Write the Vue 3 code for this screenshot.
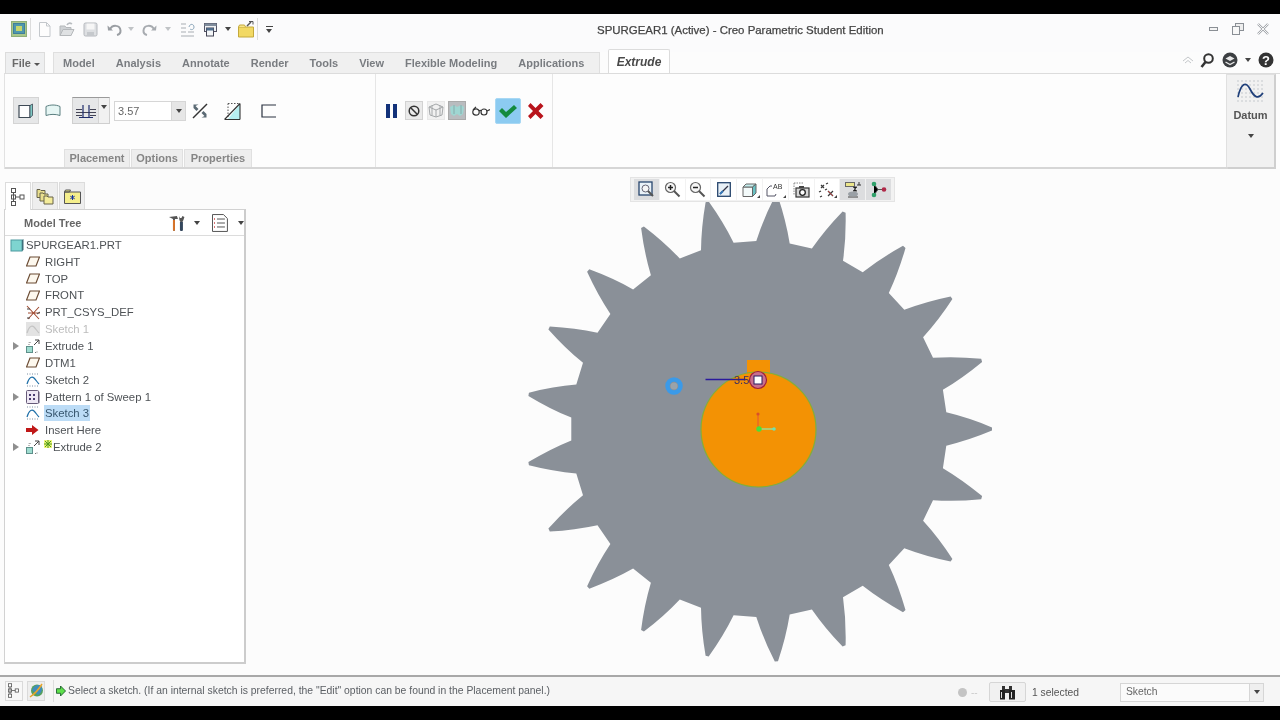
<template>
  <div class="screen">
    <div class="black top-black"></div>

    <!-- quick access + title -->
    <div class="titlebar">
      <svg class="qa i-app" width="16" height="16" viewBox="0 0 16 16"><rect x=".5" y=".5" width="15" height="15" fill="#a8c78a" stroke="#8fae78"/><rect x="2.5" y="2.5" width="11" height="10" fill="#4f97ad" stroke="#3f7f9a"/><rect x="5" y="5" width="6" height="5" fill="#c6d66c"/></svg>
      <i class="qa-sep"></i>
      <svg class="qa m7" width="13" height="15" viewBox="0 0 13 15"><path d="M1.5 .5h7l3.500 3.500v10.500h-10.500z" fill="#fdfdfd" stroke="#c4c8cc"/><path d="M8.500 .5v3.500h3.500" fill="none" stroke="#c4c8cc"/></svg>
      <svg class="qa m8" width="16" height="15" viewBox="0 0 16 15"><path d="M1 4h5l1 1.500h5v8h-11z" fill="#cfd2d5" stroke="#b5b8bb"/><path d="M1 13.500l3-6h11l-3 6z" fill="#dfe1e3" stroke="#b5b8bb"/><path d="M8 3c1-2 3-2.500 5-1" fill="none" stroke="#b8bcc0" stroke-width="1.500"/></svg>
      <svg class="qa m8" width="15" height="15" viewBox="0 0 15 15"><rect x="1" y="1" width="13" height="13" rx="1.500" fill="#dddfe2" stroke="#b5b8bd"/><rect x="3.500" y="1.500" width="8" height="6" fill="#f6f6f6"/><rect x="4" y="10" width="7" height="4" fill="#c5c8cc"/></svg>
      <svg class="qa m9" width="15" height="13" viewBox="0 0 15 13"><path d="M3 6.500c2-5 10-5 10.500 1 .2 2.500-1.500 4-3.500 4.500" fill="none" stroke="#9a9ea3" stroke-width="2"/><path d="M.5 2.500l5.500 5h-5z" fill="#9a9ea3"/></svg>
      <span class="mini-arrow light m6"></span>
      <svg class="qa m8" width="15" height="13" viewBox="0 0 15 13"><path d="M12 6.500c-2-5-10-5-10.500 1-.2 2.500 1.500 4 3.500 4.500" fill="none" stroke="#a7abb0" stroke-width="2"/><path d="M14.500 2.500l-5.500 5h5z" fill="#a7abb0"/></svg>
      <span class="mini-arrow light m8"></span>
      <svg class="qa m9" width="15" height="15" viewBox="0 0 15 15"><g fill="none" stroke="#a8adb3"><path d="M1 2h5M1 6h5M1 10h5M1 14h13M8 10h6"/><path d="M9 5c1-4 5-3 5 0s-3 3-4 2" stroke="#8da7bb"/></g></svg>
      <svg class="qa m8" width="15" height="15" viewBox="0 0 15 15"><rect x="1.500" y="1.500" width="12" height="8" fill="#eef1f4" stroke="#556"/><rect x="1.500" y="1.500" width="12" height="2.500" fill="#7f8c9c"/><rect x="3.500" y="6" width="7" height="8" fill="#f4f6f8" stroke="#445"/><rect x="3.500" y="6" width="7" height="2.500" fill="#4f6d8c"/></svg>
      <span class="mini-arrow m7"></span>
      <svg class="qa m7" width="16" height="17" viewBox="0 0 16 17"><path d="M.5 6h15v10h-15z" fill="#f2d964" stroke="#c4a93c"/><path d="M.5 6l1-2h5l1 2" fill="#f7e48c" stroke="#c4a93c"/><path d="M9 5l4-4" stroke="#555" stroke-width="1.500"/><path d="M11 .5h4v3" fill="none" stroke="#555"/></svg>
      <i class="qa-sep m5"></i>
      <span class="qa-custom m8"></span>
      <div class="title">SPURGEAR1 (Active) - Creo Parametric Student Edition</div>
      <div class="win-btns">
        <svg width="10" height="6" viewBox="0 0 10 6"><rect x=".5" y="1.500" width="8" height="3" fill="#f4f4f4" stroke="#8a8f95"/></svg>
        <svg width="12" height="12" viewBox="0 0 12 12"><rect x="3.500" y=".5" width="8" height="7" fill="#eee" stroke="#8a8f95"/><rect x=".5" y="3.500" width="7" height="8" fill="#f8f8f8" stroke="#8a8f95"/></svg>
        <svg width="12" height="12" viewBox="0 0 12 12"><path d="M1 1l10 10M11 1l-10 10" stroke="#a2a6ab" stroke-width="2.400"/><path d="M1 1l10 10M11 1l-10 10" stroke="#f6f6f6" stroke-width="1"/></svg>
      </div>
    </div>

    <!-- ribbon tabs -->
    <div class="tabrow">
      <div class="file-btn">File<span class="tiny-arrow"></span></div>
      <div class="tabstrip">
        <span v-for="t in tabs" :key="t" class="tab">{{ t }}</span>
      </div>
      <div class="active-tab">Extrude</div>
      <div class="help-icons">
        <svg width="12" height="8" viewBox="0 0 12 8"><path d="M1 5l5-4 5 4M3 7l3-2.500 3 2.500" fill="none" stroke="#c4c7ca"/></svg>
        <svg class="m6" width="14" height="15" viewBox="0 0 14 15"><circle cx="8.500" cy="5.500" r="4.300" fill="none" stroke="#333" stroke-width="2"/><path d="M5.500 9l-4 5" stroke="#333" stroke-width="2.600"/></svg>
        <svg class="m8" width="16" height="16" viewBox="0 0 16 16"><circle cx="8" cy="8" r="7.500" fill="#3c3f42"/><path d="M3.500 6.500l4.500-2.500 4.500 2.500-4.500 2.500z" fill="#e8e8e8"/><path d="M3.500 10l4.500 2.500 4.500-2.500" fill="none" stroke="#e8e8e8" stroke-width="1.400"/></svg>
        <span class="mini-arrow m7"></span>
        <svg class="m7" width="16" height="16" viewBox="0 0 16 16"><circle cx="8" cy="8" r="7.500" fill="#333"/><text x="8" y="12.500" text-anchor="middle" class="help-q">?</text></svg>
      </div>
    </div>

    <!-- ribbon -->
    <div class="ribbon">
      <div class="rib-group g1">
        <div class="tools">
          <div class="tog t-solid">
            <svg width="16" height="16" viewBox="0 0 16 16"><path d="M1 2.500h11v12h-11z" fill="#fdfdfd" stroke="#3e4a55" stroke-width="1.200"/><path d="M12 2.500l2.500-1.500v11.500l-2.500 2z" fill="#7fc9c4" stroke="#3e4a55" stroke-width=".8"/></svg>
          </div>
          <svg class="m6" width="16" height="14" viewBox="0 0 16 14"><path d="M1 2.500c4-2 10-2 14 0v9c-4-1.500-10-1.500-14 0z" fill="#e6f6f4" stroke="#5b7f80"/></svg>
          <div class="tog-split m11">
            <div class="depth"><svg width="20" height="14" viewBox="0 0 20 14"><path d="M0 5.500h6M0 8.500h20M0 11.500h6M14 5.500h6M14 11.500h6" stroke="#445"/><path d="M7 1v12M13 1v12" stroke="#1f2c6b" stroke-width="1.200"/><path d="M3 13.500h14" stroke="#1f2c6b"/></svg></div>
            <div class="depth-arrow"><span class="mini-arrow"></span></div>
          </div>
          <div class="combo m4"><span class="val">3.57</span><b><span class="mini-arrow"></span></b></div>
          <svg class="m6" width="16" height="16" viewBox="0 0 16 16"><path d="M1 15L15 1" stroke="#333" stroke-width="1.400"/><path d="M1.500 1.500h5l-3 1.500 3 3-2 2-3-3z" fill="#5b6a74"/><path d="M14.500 14.500h-5l3-1.500-3-3 2-2 3 3z" fill="#5b6a74"/></svg>
          <svg class="m16" width="18" height="18" viewBox="0 0 18 18"><path d="M4 17L16 2v15z" fill="#b6eef0"/><path d="M4 1.500h12M4 1.500v15" stroke="#555" stroke-dasharray="1.500 1.500" fill="none"/><path d="M.5 17.500L16 1.500M16 1.500v16M1 17.500h15" stroke="#333" stroke-width="1.100" fill="none"/></svg>
          <svg class="m19" width="15" height="14" viewBox="0 0 15 14"><path d="M15 1H1v12h14" fill="none" stroke="#2a3340" stroke-width="1.200"/></svg>
        </div>
        <div class="subtabs">
          <span class="subtab s1">Placement</span>
          <span class="subtab s2">Options</span>
          <span class="subtab s3">Properties</span>
        </div>
      </div>

      <div class="rib-group g2">
        <div class="tools tools2">
          <svg width="11" height="14" viewBox="0 0 11 14"><path d="M0 0h4v14h-4zM7 0h4v14h-4z" fill="#13327a"/></svg>
          <div class="sq-btn m8"><svg width="12" height="12" viewBox="0 0 12 12"><circle cx="6" cy="6" r="4.800" fill="none" stroke="#333" stroke-width="1.500"/><path d="M2.500 2.500l7 7" stroke="#333" stroke-width="1.500"/></svg></div>
          <div class="sq-btn plain m4"><svg width="16" height="15" viewBox="0 0 16 15"><g fill="none" stroke="#a5a8aa"><path d="M1 4l7-3 7 3-1 8-6 2-6-2zM1 4l7 3 7-3M8 7v7M4 2.500v10M12 2.500v10"/></g></svg></div>
          <div class="sq-btn dark m3"><svg width="16" height="15" viewBox="0 0 16 15"><path d="M1 4l4-2 3 2 4-2 3 2-1 7-3 2-3-2-3 2-3-2z" fill="#9fd6d2"/><path d="M5 2v9M12 2v9" stroke="#8aa"/></svg></div>
          <svg class="m6" width="18" height="10" viewBox="0 0 18 10"><g fill="none" stroke="#333" stroke-width="1.200"><circle cx="4" cy="6" r="3.200"/><circle cx="12" cy="6" r="3"/><path d="M7 5c1-1 1.500-1 2 0M15 5l3-1.500M1 4L4 .8"/></g></svg>
          <div class="ok-btn m5"><svg width="20" height="16" viewBox="0 0 20 16"><path d="M1 8l3-3 4 4 8-7 3 3-11 10z" fill="#138a3e"/></svg></div>
          <svg class="m6" width="17" height="16" viewBox="0 0 17 16"><path d="M1 3l2.500-3 5 5 5-5 3 3-5 5 5 5-3 3-5-5-5 5-2.500-3 5-5z" fill="#b8141c"/></svg>
        </div>
      </div>

      <div class="rib-fill"></div>

      <div class="datum">
        <svg class="datum-ic" width="30" height="24" viewBox="0 0 30 24"><g fill="#b4bac0"><circle v-for="d in datumDots" :key="d.k" :cx="d.x" :cy="d.y" r=".7"/></g><path d="M2 17C5 3 10 1 14 9s8 11 13 4" fill="none" stroke="#1f3f7a" stroke-width="1.700"/></svg>
        <div class="datum-lbl">Datum</div>
        <span class="mini-arrow"></span>
      </div>
    </div>

    <div class="main">
      <!-- model tree panel -->
      <div class="side">
        <div class="nav-tabs">
          <div class="nav-tab on">
            <svg width="15" height="18" viewBox="0 0 15 18"><g fill="#fff" stroke="#555"><rect x=".5" y=".5" width="4" height="4"/><rect x=".5" y="7" width="4" height="4"/><rect x=".5" y="13.500" width="4" height="4"/><rect x="9" y="7" width="4" height="4"/></g><path d="M2.500 4.500v9M4.500 9H9" stroke="#555"/></svg>
          </div>
          <div class="nav-tab">
            <svg width="18" height="18" viewBox="0 0 18 18"><g fill="#e9df8e" stroke="#66624a"><path d="M1 2.500h3l1 1h4v7H1z"/><path d="M4 6h3l1 1h4v7H4z"/><path d="M8 9h3l1 1h5v7H8z" fill="#f4ec9a"/></g></svg>
          </div>
          <div class="nav-tab">
            <svg width="17" height="15" viewBox="0 0 17 15"><path d="M.5 3h5l1-2h-5l-1 2zM.5 3h16v11.500h-16z" fill="#f5ef8c" stroke="#555"/><path d="M8.500 6v5M6.300 7.200l4.400 2.600M10.700 7.200L6.300 9.800" stroke="#1533a0"/></svg>
          </div>
        </div>
        <div class="tree-panel">
          <div class="tree-head">
            <span class="tree-title">Model Tree</span>
            <svg class="ic-tools" width="18" height="18" viewBox="0 0 18 18"><path d="M1 3l8-1 1 3H7v11c0 1-1.500 1.500-2 0V5z" fill="#555" /><path d="M5 6h2v10c0 1-1.500 1.500-2 0z" fill="#d8742a"/><path d="M12 8h3v8c0 1.500-3 1.500-3 0z" fill="#33465c"/><path d="M11 2l1 2 1.500 0 1-2 2 1-1 3-1 2h-2l-1-2z" fill="#555"/></svg>
            <span class="mini-arrow m8"></span>
            <svg class="m12" width="16" height="18" viewBox="0 0 16 18"><path d="M.5.5h11l4 4v13H.5z" fill="#fff" stroke="#555"/><path d="M5 5h8M5 9h8M5 13h8" stroke="#555"/><path d="M2 5h1M2 9h1M2 13h1" stroke="#c44" stroke-width="1.400"/></svg>
            <span class="mini-arrow m10"></span>
          </div>
          <div class="tree">
            <div v-for="r in rows" :key="r.label" class="row" :class="{ root: r.kind === 'root', off: r.off }">
              <span class="tw"><i v-if="r.more"></i></span>
              <span class="ic">
                <svg v-if="r.kind === 'root'" width="14" height="14" viewBox="0 0 14 14"><rect x="1" y="2" width="11" height="11" fill="#7ed4d0" stroke="#4d9aa0"/><path d="M12 2l1.500-1v11l-1.500 1z" fill="#3d6f7a"/></svg>
                <svg v-else-if="r.kind === 'plane'" width="14" height="11" viewBox="0 0 14 11"><path d="M4 1h9.500l-3.500 9H.5z" fill="#fdf8ee" stroke="#6a4b33" stroke-width="1.200"/></svg>
                <svg v-else-if="r.kind === 'csys'" width="15" height="15" viewBox="0 0 15 15"><path d="M1 1l12 13M13 2L2 14M2 8h12" stroke="#a04a30" stroke-width="1.100"/><path d="M1 4h3M11 9l3-2M1 13h3" stroke="#444"/></svg>
                <svg v-else-if="r.kind === 'sketch'" width="14" height="14" viewBox="0 0 14 14"><rect v-if="r.off" width="14" height="14" fill="#e3e3e3"/><path d="M1 1h12M1 13h12" :stroke="r.off ? '#e3e3e3' : '#7a8da0'" stroke-dasharray="1 1.500"/><path d="M1 11C3 4 6 3 8 5s3 4 5 6" fill="none" :stroke="r.off ? '#c4c4c4' : '#1e6fa8'" stroke-width="1.200"/></svg>
                <svg v-else-if="r.kind === 'extrude'" width="14" height="14" viewBox="0 0 14 14"><rect x=".5" y="7.500" width="6" height="6" fill="#9fdcd0" stroke="#5d8f8a"/><path d="M3 6V3.500h2M9 13.500h2v-2" fill="none" stroke="#777" stroke-dasharray="1 1"/><path d="M8 6l5-5M9 1h4v4" fill="none" stroke="#444"/></svg>
                <svg v-else-if="r.kind === 'pattern'" width="14" height="14" viewBox="0 0 14 14"><rect x=".5" y=".5" width="12" height="13" rx="1" fill="#eee8f4" stroke="#665a78"/><path d="M12.500 1l1 1v11l-1 .5z" fill="#665a78"/><g fill="#4a3c70"><rect x="3" y="4" width="2" height="2"/><rect x="7" y="4" width="2" height="2"/><rect x="3" y="8" width="2" height="2"/><rect x="7" y="8" width="2" height="2"/></g></svg>
                <svg v-else-if="r.kind === 'insert'" width="13" height="10" viewBox="0 0 13 10"><path d="M0 3h6V0l6.500 5L6 10V7H0z" fill="#c01818"/></svg>
              </span>
              <svg v-if="r.star" class="star" width="8" height="8" viewBox="0 0 8 8"><rect width="8" height="8" fill="#eef47a"/><path d="M4 0v8M0 4h8M1 1l6 6M7 1L1 7" stroke="#4f9a1c"/></svg>
              <span class="lbl" :class="{ sel: r.sel }">{{ r.label }}</span>
            </div>
          </div>
        </div>
      </div>

      <!-- graphics window -->
      <div class="canvas">
        <div class="view-bar">
          <div class="vb on"><svg width="17" height="17" viewBox="0 0 17 17"><rect x="1" y="1" width="13" height="13" fill="#eaf2f8" stroke="#27466d" stroke-width="1.300"/><circle cx="7.500" cy="7.500" r="3.500" fill="#f6f6f6" stroke="#667"/><path d="M10 10l5 5" stroke="#555" stroke-width="2"/></svg></div>
          <div class="vb"><svg width="17" height="17" viewBox="0 0 17 17"><circle cx="6.500" cy="6.500" r="5" fill="#f6f6f6" stroke="#666" stroke-width="1.200"/><path d="M4 6.500h5M6.500 4v5" stroke="#222" stroke-width="1.500"/><path d="M10 10l5.500 5.500" stroke="#555" stroke-width="2"/></svg></div>
          <div class="vb"><svg width="17" height="17" viewBox="0 0 17 17"><circle cx="6.500" cy="6.500" r="5" fill="#f6f6f6" stroke="#666" stroke-width="1.200"/><path d="M4 6.500h5" stroke="#222" stroke-width="1.500"/><path d="M10 10l5.500 5.500" stroke="#555" stroke-width="2"/></svg></div>
          <div class="vb"><svg width="14" height="15" viewBox="0 0 14 15"><rect x=".7" y=".7" width="12.600" height="13.600" fill="#e8f0f6" stroke="#27466d" stroke-width="1.300"/><path d="M3 12l8-8" stroke="#334" stroke-width="1.200"/><path d="M3 12l3-3" stroke="#3577b8" stroke-width="2"/></svg></div>
          <div class="vb tri"><svg width="15" height="14" viewBox="0 0 15 14"><path d="M1 4h9.500v9.500H1z" fill="#f3fafa" stroke="#666"/><path d="M1 4l3-3h10L10.500 4z" fill="#c6eeee" stroke="#666"/><path d="M10.500 4L14 1v9l-3.500 3.500z" fill="#67c2c4" stroke="#666"/></svg></div>
          <div class="vb tri"><svg width="18" height="15" viewBox="0 0 18 15"><path d="M1 7l3-3h2M1 7v7h8l1-2" fill="none" stroke="#556"/><text x="7" y="7" class="ab">AB</text></svg></div>
          <div class="vb"><svg width="17" height="16" viewBox="0 0 17 16"><path d="M1 1h10M1 1v12" stroke="#888" stroke-dasharray="1.500 1"/><rect x="3" y="6" width="13" height="9" fill="#d8d8d8" stroke="#333" stroke-width="1.200"/><circle cx="9.500" cy="10.500" r="2.800" fill="#fff" stroke="#222" stroke-width="1.300"/><rect x="6" y="4" width="5" height="2" fill="#444"/></svg></div>
          <div class="vb tri"><svg width="17" height="16" viewBox="0 0 17 16"><g stroke="#3a3a3a" stroke-width="1.200"><path d="M3 3l3 3M3 6l3-3"/><path d="M10 9l5 5M15 9l-5 5"/><path d="M8 2l2-1M1 10l2-1M7 8l2-1M2 15l2-1"/></g><path d="M10 9l5 5" stroke="#a33"/></svg></div>
          <div class="vb on"><svg width="16" height="17" viewBox="0 0 16 17"><rect x=".5" y="1.500" width="9" height="4" fill="#ebe58a" stroke="#666"/><path d="M12 4h4M14 1v3" stroke="#333"/><path d="M8 6h4l-4 4h4M3 16h10" stroke="#444"/><ellipse cx="8" cy="13" rx="5" ry="2.500" fill="#9aa0a6"/></svg></div>
          <div class="vb on"><svg width="16" height="17" viewBox="0 0 16 17"><path d="M3 3l4 5.500L3 14M7 8.500h7" stroke="#555"/><circle cx="3" cy="3" r="2.300" fill="#2fa06a"/><circle cx="3" cy="14" r="2.300" fill="#2fa06a"/><circle cx="13" cy="8.500" r="2.300" fill="#b02848"/></svg></div>
        </div>

        <svg class="gear" width="480" height="480" viewBox="-240 -240 480 480">
          <path :d="gearPath" fill="#8a9098"/>
          <path d="M-12-69h23v14h-23z" fill="#f39204"/>
          <circle cx="-0.500" cy="0.500" r="57.500" fill="#f39204" stroke="#83ae3a" stroke-width="1.200"/>
          <circle cx="-85" cy="-43" r="6.500" fill="none" stroke="#3b9ae8" stroke-width="4.500"/>
          <circle cx="-85" cy="-43" r="3.500" fill="#9aa3aa"/>
          <path d="M-53.500-49.500h40" stroke="#2a1a9c" stroke-width="1.300"/>
          <circle cx="-1" cy="-49" r="8.500" fill="#c8708e" stroke="#a01e3a" stroke-width="1.200"/>
          <text x="-25" y="-45.500" class="dim">3.5</text>
          <rect x="-5" y="-53" width="8" height="8" fill="#fff" stroke="#2a1a5c" stroke-width="1"/>
          <path d="M-1 0v-14" stroke="#e8642a" stroke-width="1.300"/>
          <circle cx="-1" cy="-15" r="1.600" fill="#d8502a"/>
          <path d="M1 0h14" stroke="#90e8a8" stroke-width="1.300"/>
          <circle cx="15" cy="0" r="1.800" fill="#70e0b0"/>
          <circle cx="0" cy="0" r="2.700" fill="#46e03c"/>
        </svg>
      </div>
    </div>

    <!-- status bar -->
    <div class="status">
      <div class="st-btn on"><svg width="12" height="15" viewBox="0 0 15 18"><g fill="#fff" stroke="#555"><rect x=".5" y=".5" width="4" height="4"/><rect x=".5" y="7" width="4" height="4"/><rect x=".5" y="13.500" width="4" height="4"/><rect x="9" y="7" width="4" height="4"/></g><path d="M2.500 4.500v9M4.500 9H9" stroke="#555"/></svg></div>
      <div class="st-btn m4"><svg width="15" height="15" viewBox="0 0 15 15"><circle cx="8" cy="7.500" r="6" fill="#57a05c"/><path d="M3 7c2-5 7-6 9-4s1 7-3 9" fill="#3f8dbd"/><path d="M1 14C4 12 10 6 13 1" stroke="#e8a52c" stroke-width="1.500" fill="none"/></svg></div>
      <i class="st-sep"></i>
      <svg class="st-arrow" width="10" height="12" viewBox="0 0 11 12"><path d="M.5 3.500h4.500V.5l5.500 5.500-5.500 5.500v-3H.5z" fill="#5ee04c" stroke="#1c5c2c"/></svg>
      <span class="msg">Select a sketch. (If an internal sketch is preferred, the "Edit" option can be found in the Placement panel.)</span>
      <div class="st-right">
        <span class="dot"></span><span class="dash">--</span>
        <div class="find"><svg width="17" height="15" viewBox="0 0 17 15"><path d="M1 5h5v9.500H1zM10 5h6v9.500h-6z" fill="#222"/><path d="M3 1h3v4H3zM10 1h3v4h-3zM6 4h4v4H6z" fill="#333"/><path d="M2 7h1v6H2zM12 7h1v6h-1z" fill="#ddd"/></svg></div>
        <span class="sel-count">1 selected</span>
        <div class="filter"><span class="val">Sketch</span><b><span class="mini-arrow"></span></b></div>
      </div>
    </div>
    <div class="black bottom-black"></div>
  </div>
</template>

<script setup>
const tabs = ['Model', 'Analysis', 'Annotate', 'Render', 'Tools', 'View', 'Flexible Modeling', 'Applications']

const rows = [
  { label: 'SPURGEAR1.PRT', kind: 'root' },
  { label: 'RIGHT', kind: 'plane' },
  { label: 'TOP', kind: 'plane' },
  { label: 'FRONT', kind: 'plane' },
  { label: 'PRT_CSYS_DEF', kind: 'csys' },
  { label: 'Sketch 1', kind: 'sketch', off: true },
  { label: 'Extrude 1', kind: 'extrude', more: true },
  { label: 'DTM1', kind: 'plane' },
  { label: 'Sketch 2', kind: 'sketch' },
  { label: 'Pattern 1 of Sweep 1', kind: 'pattern', more: true },
  { label: 'Sketch 3', kind: 'sketch', sel: true },
  { label: 'Insert Here', kind: 'insert' },
  { label: 'Extrude 2', kind: 'extrude', more: true, star: true },
]

const datumDots = []
for (let x = 2; x < 30; x += 4) {
  for (let y = 1; y < 24; y += 4) datumDots.push({ k: x + '-' + y, x, y })
}

// 21 teeth, tip on the +x axis
function polar(r, deg) {
  const a = (deg * Math.PI) / 180
  return (r * Math.cos(a)).toFixed(1) + ' ' + (-r * Math.sin(a)).toFixed(1)
}

function buildGear() {
  const step = 360 / 21
  let d = ''
  for (let k = 0; k < 21; k++) {
    const a = k * step
    d += (k === 0 ? 'M' : 'L') + polar(188, a - 5.1) + ' '
    d += 'Q' + polar(210, a - 3.1) + ' ' + polar(233, a - 0.4) + ' '
    d += 'L' + polar(233, a + 0.4) + ' '
    d += 'Q' + polar(210, a + 3.1) + ' ' + polar(188, a + 5.1) + ' '
  }
  return d + 'Z'
}

const gearPath = buildGear()
</script>

<style>
html, body { margin: 0; background: #000; }
</style>

<style scoped>
.screen {
  width: 1280px;
  height: 720px;
  display: flex;
  flex-direction: column;
  background: #fcfcfc;
  font-family: "Liberation Sans", Arial, sans-serif;
  color: #555;
  overflow: hidden;
  filter: blur(0.3px);
}
.black { background: #000; flex: none; }
.top-black { height: 14px; }
.bottom-black { height: 14px; }

.m3 { margin-left: 3px; } .m4 { margin-left: 4px; } .m5 { margin-left: 5px; } .m6 { margin-left: 6px; }
.m7 { margin-left: 7px; } .m8 { margin-left: 8px; } .m9 { margin-left: 9px; } .m10 { margin-left: 10px; }
.m11 { margin-left: 11px; } .m12 { margin-left: 12px; } .m16 { margin-left: 16px; } .m19 { margin-left: 19px; }

.titlebar {
  height: 38px;
  flex: none;
  display: flex;
  align-items: center;
  padding-left: 11px;
  position: relative;
  padding-bottom: 8px;
  box-sizing: border-box;
  background: #fbfbfc;
}
.qa { flex: none; }
.qa-sep { width: 1px; height: 22px; background: #dcdcdc; margin-left: 3px; flex: none; }
.mini-arrow {
  display: inline-block;
  width: 0;
  height: 0;
  border-left: 3.5px solid transparent;
  border-right: 3.5px solid transparent;
  border-top: 4px solid #444;
  flex: none;
}
.mini-arrow.light { border-top-color: #c0c3c6; }
.qa-custom {
  width: 7px;
  height: 6px;
  border-top: 1.5px solid #444;
  position: relative;
  flex: none;
}
.qa-custom::after {
  content: "";
  position: absolute;
  top: 2px;
  left: 0;
  border-left: 3.5px solid transparent;
  border-right: 3.5px solid transparent;
  border-top: 4px solid #444;
}
.title {
  position: absolute;
  left: 597px;
  top: 9px;
  font-size: 11.450px;
  line-height: 14px;
  color: #444;
  -webkit-text-stroke: 0.25px #444;
  white-space: nowrap;
}
.win-btns {
  position: absolute;
  right: 11px;
  top: 9px;
  display: flex;
  align-items: center;
  gap: 13px;
}

.tabrow {
  height: 21px;
  flex: none;
  display: flex;
  position: relative;
  padding-left: 5px;
  font-size: 11px;
  font-weight: bold;
}
.file-btn {
  width: 40px;
  box-sizing: border-box;
  background: #eeeff0;
  border: 1px solid #dcdcdc;
  border-bottom: none;
  padding-left: 6px;
  line-height: 20px;
  font-size: 11px;
  color: #6a6a6a;
}
.tiny-arrow {
  display: inline-block;
  margin-left: 3px;
  vertical-align: middle;
  border-left: 3px solid transparent;
  border-right: 3px solid transparent;
  border-top: 3.5px solid #555;
}
.tabstrip {
  margin-left: 8px;
  width: 547px;
  box-sizing: border-box;
  display: flex;
  background: #f0f0f0;
  border: 1px solid #dfdfdf;
  border-bottom: none;
  white-space: nowrap;
  padding-left: 0;
}
.tab {
  padding: 0 10.500px;
  line-height: 20px;
  color: #797c80;
}
.tab:first-child { padding-left: 9px; }
.active-tab {
  position: absolute;
  left: 608px;
  top: -3px;
  width: 62px;
  height: 24px;
  box-sizing: border-box;
  background: #fff;
  border: 1px solid #dcdcdc;
  border-bottom: none;
  border-radius: 2px 2px 0 0;
  text-align: center;
  line-height: 24px;
  font-size: 12px;
  font-style: italic;
  color: #4a4a4a;
}
.help-icons {
  position: absolute;
  right: 6px;
  top: -3px;
  display: flex;
  align-items: center;
  height: 22px;
}
.help-q { font-size: 13px; font-weight: bold; fill: #fff; }

.ribbon {
  height: 96px;
  flex: none;
  display: flex;
  box-sizing: border-box;
  margin-left: 4px;
  background: #fdfdfd;
  border-left: 1px solid #e2e2e2;
  border-top: 1px solid #dcdcdc;
  position: relative;
}
.ribbon::after {
  content: "";
  position: absolute;
  left: 0;
  right: 52px;
  bottom: 0;
  height: 2px;
  background: #d6d6d6;
}
.rib-group { display: flex; flex-direction: column; flex: none; box-sizing: border-box; }
.g1 { width: 370px; }
.g2 { width: 178px; border-left: 1px solid #e6e6e6; border-right: 1px solid #e6e6e6; }
.rib-fill { flex: 1; }
.tools {
  height: 51px;
  flex: none;
  display: flex;
  align-items: center;
  padding: 22px 0 0 8px;
  box-sizing: border-box;
}
.tools2 { padding-left: 10px; }
.tog {
  width: 26px;
  height: 27px;
  display: flex;
  align-items: center;
  justify-content: center;
  background: #e6e7e8;
  border: 1px solid #d4d4d4;
  box-sizing: border-box;
}
.tog-split {
  display: flex;
  height: 27px;
  width: 38px;
  box-sizing: border-box;
  border: 1px solid #cfcfcf;
  border-top: 1.500px solid #9a9a9a;
  background: #e6e7e8;
}
.depth { width: 25px; display: flex; align-items: center; justify-content: center; }
.depth-arrow { flex: 1; display: flex; justify-content: center; padding-top: 7px; border-left: 1px solid #d4d4d4; background: #f1f1f1; }
.combo {
  width: 72px;
  height: 20px;
  box-sizing: border-box;
  border: 1px solid #d6d6d6;
  background: #fff;
  display: flex;
  font-size: 11px;
  color: #666;
}
.combo .val { flex: 1; padding-left: 3px; line-height: 18px; }
.combo b, .filter b {
  width: 13px;
  display: flex;
  align-items: center;
  justify-content: center;
  background: #e6e6e6;
  border-left: 1px solid #d6d6d6;
}
.subtabs {
  margin-top: 24px;
  margin-left: 59px;
  display: flex;
  gap: 1px;
  font-size: 11px;
  font-weight: bold;
  color: #858585;
}
.subtab {
  height: 19px;
  line-height: 16px;
  background: #eeeeee;
  border: 1px solid #e0e0e0;
  border-bottom: none;
  box-sizing: border-box;
  text-align: center;
}
.s1 { width: 66px; } .s2 { width: 52px; } .s3 { width: 68px; }
.sq-btn {
  width: 18px;
  height: 19px;
  box-sizing: border-box;
  display: flex;
  align-items: center;
  justify-content: center;
  background: #eaeaea;
  border: 1px solid #d2d2d2;
  flex: none;
}
.sq-btn.plain { background: #f1f1f1; border-color: #e8e8e8; }
.sq-btn.dark { background: #b9bcbf; border-color: #aaa; }
.ok-btn {
  width: 26px;
  height: 26px;
  display: flex;
  align-items: center;
  justify-content: center;
  border-radius: 2px;
  background: #8ccbf1;
  border: 1px solid #a8d8f4;
  box-sizing: border-box;
  flex: none;
}
.datum {
  width: 50px;
  height: 95px;
  margin-right: 4px;
  box-sizing: border-box;
  background: #f1f1f1;
  border: 1px solid #e0e0e0;
  border-right: 2px solid #cfcfcf;
  border-bottom: 2px solid #cfcfcf;
  display: flex;
  flex-direction: column;
  align-items: center;
}
.datum-ic { margin-top: 5px; }
.datum-lbl { font-size: 11px; font-weight: bold; color: #555; margin-top: 5px; margin-bottom: 13px; }

.main { flex: 1; display: flex; min-height: 0; }
.side { width: 246px; flex: none; padding: 13px 0 11px 4px; box-sizing: border-box; display: flex; flex-direction: column; }
.nav-tabs { display: flex; height: 27px; flex: none; padding-left: 1px; gap: 1px; position: relative; z-index: 1; }
.nav-tab {
  width: 26px;
  height: 27px;
  box-sizing: border-box;
  background: #eeeeee;
  border: 1px solid #dcdcdc;
  border-bottom: none;
  display: flex;
  align-items: center;
  justify-content: center;
}
.nav-tab.on { background: #fff; height: 28px; }
.tree-panel {
  flex: 1;
  background: #fff;
  border: 1px solid #d2d2d2;
  border-left-width: 1.500px;
  border-right: 2px solid #cccccc;
  border-bottom: 2px solid #cccccc;
  box-sizing: border-box;
  min-height: 0;
}
.tree-head {
  height: 26px;
  display: flex;
  align-items: center;
  padding-left: 19px;
  border-bottom: 1px solid #dcdcdc;
  box-sizing: border-box;
}
.tree-title { font-size: 11px; font-weight: bold; color: #666; width: 145px; }
.ic-tools { margin-left: 0; }
.tree { padding-top: 0.500px; font-size: 11.350px; color: #4e5256; }
.row {
  height: 16.850px;
  display: flex;
  align-items: center;
  white-space: nowrap;
  padding-left: 7px;
  position: relative;
}
.row.off { color: #bcbcbc; }
.tw { width: 12px; flex: none; display: flex; }
.tw i {
  width: 0;
  height: 0;
  margin-left: 1px;
  border-top: 4px solid transparent;
  border-bottom: 4px solid transparent;
  border-left: 6px solid #8f8f8f;
}
.ic { width: 19px; flex: none; display: flex; justify-content: flex-start; margin-left: 2px; }
.row.root .tw { display: none; }
.row.root { padding-left: 3px; }
.row.root .ic { width: 16px; }
.lbl { padding: 0 1px; line-height: 16px; margin-left: -1px; }
.lbl.sel { background: #bcdcf6; color: #37566e; }
.star { margin-left: -1px; margin-right: 1px; align-self: flex-start; margin-top: 1px; }

.canvas {
  flex: 1;
  position: relative;
  margin-right: 9px;
  display: flex;
  justify-content: center;
  padding-top: 20px;
  box-sizing: border-box;
  min-width: 0;
  overflow: hidden;
}
.gear { display: block; flex: none; }
.dim { font-size: 11px; fill: #3c2c60; font-family: "Liberation Sans", Arial, sans-serif; }
.ab { font-size: 7px; fill: #333; font-family: "Liberation Sans", Arial, sans-serif; }
.view-bar {
  position: absolute;
  top: 8px;
  left: 384px;
  width: 265px;
  height: 25px;
  box-sizing: border-box;
  padding: 1px 3px;
  display: flex;
  gap: 1px;
  background: #f2f2f2;
  border: 1px solid #e4e4e4;
  z-index: 2;
}
.vb {
  flex: 1;
  display: flex;
  align-items: center;
  justify-content: center;
  background: #fff;
  position: relative;
}
.vb.on { background: #dcdddf; }
.vb.tri::after {
  content: "";
  position: absolute;
  right: 2px;
  bottom: 2px;
  border-left: 3px solid transparent;
  border-bottom: 3px solid #444;
}

.status {
  height: 31px;
  flex: none;
  box-sizing: border-box;
  border-top: 2px solid #a8a8a8;
  background: #f6f6f6;
  display: flex;
  align-items: center;
  padding: 0 0 2px 5px;
  font-size: 11px;
  color: #5c6065;
  position: relative;
}
.st-btn {
  width: 18px;
  height: 20px;
  box-sizing: border-box;
  display: flex;
  align-items: center;
  justify-content: center;
  background: #eeeeee;
  border: 1px solid #dadada;
}
.st-btn.on { background: #f8f8f8; }
.st-sep { width: 1px; height: 22px; background: #dddddd; margin-left: 8px; }
.st-arrow { margin-left: 2px; margin-right: 2px; }
.msg { white-space: nowrap; font-size: 10.380px; }
.st-right {
  position: absolute;
  left: 958px;
  top: 5px;
  display: flex;
  align-items: center;
  height: 20px;
}
.dot { width: 9px; height: 9px; border-radius: 50%; background: #c4c4c4; }
.dash { color: #ccc; margin-left: 4px; width: 18px; font-size: 10px; }
.find {
  width: 37px;
  height: 20px;
  box-sizing: border-box;
  display: flex;
  align-items: center;
  justify-content: center;
  background: #f1f1f1;
  border: 1px solid #d6d6d6;
  border-radius: 2px;
}
.sel-count { margin-left: 6px; width: 88px; font-size: 10.300px; color: #555; }
.filter {
  width: 144px;
  height: 19px;
  box-sizing: border-box;
  display: flex;
  background: #fbfbfb;
  border: 1px solid #d6d6d6;
}
.filter .val { flex: 1; padding-left: 5px; line-height: 16px; font-size: 10.300px; color: #666; }
.filter b { background: #efefef; }
</style>
